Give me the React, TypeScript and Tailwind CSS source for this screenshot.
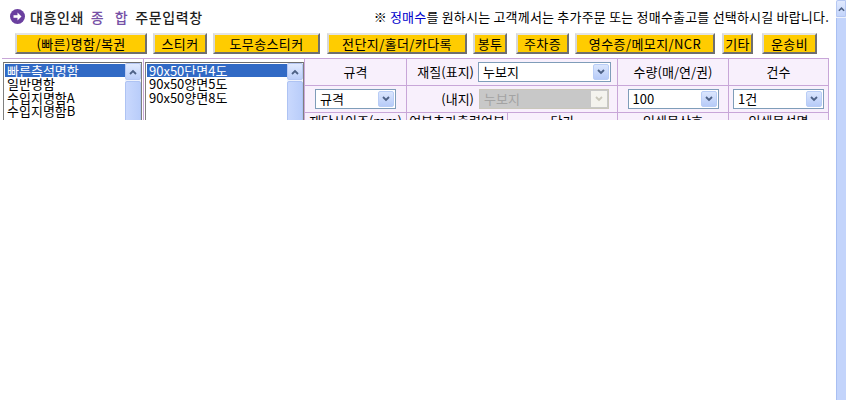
import React from "react";

const FONT = "font-['Noto_Sans_CJK_KR','Noto_Sans',sans-serif]";

function Chevron({ color = "#4d6185" }: { color?: string }) {
  return (
    <svg width="8" height="6" viewBox="0 0 8 6">
      <polyline points="1,1 4,4 7,1" fill="none" stroke={color} strokeWidth="1.8" />
    </svg>
  );
}

function ChevronUp() {
  return (
    <svg width="8" height="6" viewBox="0 0 8 6">
      <polyline points="1,5 4,2 7,5" fill="none" stroke="#4d6185" strokeWidth="1.8" />
    </svg>
  );
}

function Select({ w, text, disabled }: { w: string; text: string; disabled?: boolean }) {
  if (disabled) {
    return (
      <div className={`${w} h-[20px] border border-[#c9c7ba] bg-[#c8c8c8] flex items-stretch`}>
        <div className="flex-1 pl-[4px] text-[13px] leading-[18px] text-[#a3a3a3]">{text}</div>
        <div className="w-[16px] m-[1px] bg-[#f4f3ee] flex items-center justify-center">
          <Chevron color="#c9c7ba" />
        </div>
      </div>
    );
  }
  return (
    <div className={`${w} h-[20px] border border-[#7f9db9] bg-white flex items-stretch`}>
      <div className="flex-1 pl-[4px] text-[13px] leading-[18px] text-black">{text}</div>
      <div className="w-[16px] m-[1px] rounded-[2px] border border-[#b9cdf6] bg-gradient-to-b from-[#dbe6fd] to-[#b7cbf8] flex items-center justify-center">
        <Chevron />
      </div>
    </div>
  );
}

function ListBox({ w, items }: { w: string; items: string[] }) {
  return (
    <div className={`${w} h-[70px] mt-[3px] ml-[1px] border border-[#7f7f7f] border-t-[#6e6e6e] bg-white flex`}>
      <div className="flex-1 pt-[1px] pl-[1px]">
        {items.map((it, i) => (
          <div
            key={it}
            className={`h-[13.4px] text-[13px] leading-[13.4px] pl-[2px] whitespace-nowrap ${
              i === 0 ? "bg-[#316ac5] text-white" : "text-black"
            }`}
          >
            {it}
          </div>
        ))}
      </div>
      <div className="w-[16px] bg-[#eef2fc] flex flex-col">
        <div className="h-[17px] rounded-[2px] border border-[#b6c8f3] bg-gradient-to-b from-[#e1eafe] to-[#bccff9] flex items-center justify-center">
          <ChevronUp />
        </div>
        <div className="flex-1 mt-[1px] rounded-[2px] border border-[#aec3f3] bg-gradient-to-r from-[#c9d8fd] to-[#b9cdfa]" />
      </div>
    </div>
  );
}

function YBtn({ label, w, ml }: { label: string; w: string; ml: string }) {
  return (
    <div
      className={`${w} ${ml} h-[21px] bg-[#ffcc00] border-2 border-t-[#e4e4e4] border-l-[#d8d8d8] border-r-[#6f6f6f] border-b-[#6f6f6f] flex items-center justify-center text-[13px] tracking-[0.4px] text-black leading-none whitespace-nowrap`}
    >
      {label}
    </div>
  );
}

export default function App() {
  const line = "border-[#c8a6d8]";
  return (
    <div className={`w-[846px] h-[420px] bg-white flex ${FONT}`}>
      <div className="w-[836px] h-[120px] overflow-hidden">
        {/* header */}
        <div className="h-[33px] flex items-center pl-[10px] pr-[7px]">
          <svg width="15" height="15" viewBox="0 0 15 15">
            <circle cx="7.5" cy="7.5" r="7.5" fill="#6a3f9f" />
            <rect x="3.5" y="6.2" width="4.5" height="2.6" fill="#fff" />
            <polygon points="7.5,3.6 11.5,7.5 7.5,11.4" fill="#fff" />
          </svg>
          <div className="ml-[5px] text-[14px] tracking-[0.6px] leading-none text-[#1e1e1e] whitespace-nowrap font-medium">
            대흥인쇄 <span className="text-[#7650a6] tracking-[4px] ml-[3px]">종 합</span> 주문입력창
          </div>
          <div className="flex-1" />
          <div className="text-[13px] tracking-[0.2px] leading-none text-black whitespace-nowrap">
            ※ <span className="text-[#0000cc]">정매수</span>를 원하시는 고객께서는 추가주문 또는 정매수출고를 선택하시길 바랍니다.
          </div>
        </div>
        {/* buttons */}
        <div className="flex h-[21px]">
          <YBtn label="(빠른)명함/복권" w="w-[132px]" ml="ml-[15px]" />
          <YBtn label="스티커" w="w-[54px]" ml="ml-[6px]" />
          <YBtn label="도무송스티커" w="w-[107px]" ml="ml-[6px]" />
          <YBtn label="전단지/홀더/카다록" w="w-[140px]" ml="ml-[7px]" />
          <YBtn label="봉투" w="w-[34px]" ml="ml-[6px]" />
          <YBtn label="주차증" w="w-[53px]" ml="ml-[9px]" />
          <YBtn label="영수증/메모지/NCR" w="w-[140px]" ml="ml-[6px]" />
          <YBtn label="기타" w="w-[31px]" ml="ml-[7px]" />
          <YBtn label="운송비" w="w-[55px]" ml="ml-[9px]" />
        </div>
        {/* table */}
        <div className={`mt-[4px] ml-[2px] w-[827px] border-t ${line} flex`}>
          <div className={`w-[142px] border-r ${line}`}>
            <ListBox w="w-[139px]" items={["빠른측석명함", "일반명함", "수입지명함A", "수입지명함B"]} />
          </div>
          <div className={`w-[161px] border-r ${line}`}>
            <ListBox w="w-[159px]" items={["90x50단면4도", "90x50양면5도", "90x50양면8도"]} />
          </div>
          <div className="w-[524px] grid grid-cols-[102px_101px_110px_111px_100px] grid-rows-[27px_27px_27px] bg-[#f8f0fc] text-[13px] text-black">
            <div className={`border-r border-b ${line} flex items-center justify-center`}>규격</div>
            <div className={`col-span-2 border-r border-b ${line} flex items-center justify-end pr-[6px]`}>
              <span className="mr-[4px]">재질(표지)</span>
              <Select w="w-[133px]" text="누보지" />
            </div>
            <div className={`border-r border-b ${line} flex items-center justify-center`}>수량(매/연/권)</div>
            <div className={`border-r border-b ${line} flex items-center justify-center`}>건수</div>

            <div className={`border-r border-b ${line} flex items-center justify-center`}>
              <Select w="w-[81px]" text="규격" />
            </div>
            <div className={`col-span-2 border-r border-b ${line} flex items-center justify-end pr-[8px]`}>
              <span className="mr-[5px]">(내지)</span>
              <Select w="w-[130px]" text="누보지" disabled />
            </div>
            <div className={`border-r border-b ${line} flex items-center justify-center`}>
              <Select w="w-[91px]" text="100" />
            </div>
            <div className={`border-r border-b ${line} flex items-center justify-center`}>
              <Select w="w-[91px]" text="1건" />
            </div>

            <div className={`border-r border-b ${line} flex justify-center pt-[1px] leading-[14px] whitespace-nowrap overflow-hidden`}>재단사이즈(mm)</div>
            <div className={`border-r border-b ${line} flex justify-center pt-[1px] leading-[14px] whitespace-nowrap overflow-hidden`}>여분추가출력여부</div>
            <div className={`border-r border-b ${line} flex justify-center pt-[1px] leading-[14px]`}>단가</div>
            <div className={`border-r border-b ${line} flex justify-center pt-[1px] leading-[14px]`}>인쇄물상호</div>
            <div className={`border-r border-b ${line} flex justify-center pt-[1px] leading-[14px]`}>인쇄물설명</div>
          </div>
        </div>
      </div>
      {/* page scrollbar */}
      <div className="w-[10px] h-[400px] flex flex-col bg-[#eef2fc]">
        <div className="h-[17px] border border-[#b6c8f3] rounded-tl-[2px] bg-gradient-to-b from-[#e1eafe] to-[#c3d4fb] flex items-center pl-[1px]">
          <ChevronUp />
        </div>
        <div className="flex-1 mt-[1px] border-l border-[#a9bff2] bg-[#c3d4fb]" />
      </div>
    </div>
  );
}
